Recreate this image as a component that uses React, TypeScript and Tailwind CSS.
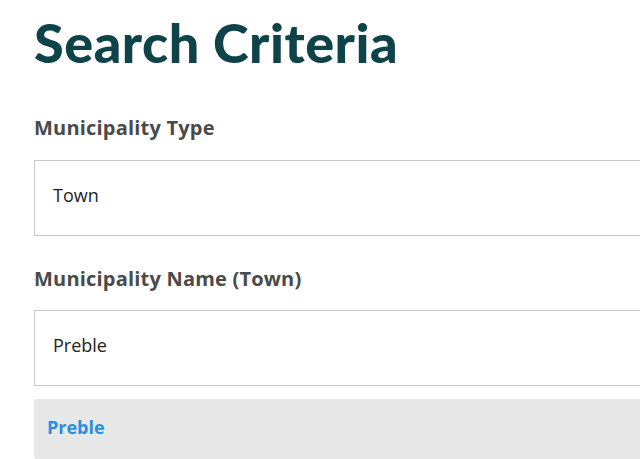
export default function App() {
  return (
    <div className="min-h-screen w-full overflow-hidden bg-white pl-[34px] pt-[11px] font-['Open_Sans',sans-serif]">
      <h1 className="font-['Lato',sans-serif] text-[54px] font-black leading-[64px] tracking-[0.5px] text-[#0f434a]">
        Search Criteria
      </h1>

      <div className="mt-[41px]">
        <label className="block text-[20px] font-bold leading-[24px] tracking-[0.2px] text-[#4a4a4a]">
          Municipality Type
        </label>
        <div className="mt-[20px] flex h-[76px] items-center border border-r-0 border-[#c6c6c6] pb-[5px] pl-[18px] text-[18px] text-[#222]">
          Town
        </div>
      </div>

      <div className="mt-[31px]">
        <label className="block text-[20px] font-bold leading-[24px] tracking-[0.2px] text-[#4a4a4a]">
          Municipality Name (Town)
        </label>
        <div className="mt-[19px] flex h-[76px] items-center border border-r-0 border-[#c6c6c6] pb-[5px] pl-[18px] text-[18px] text-[#222]">
          Preble
        </div>
      </div>

      <div className="mt-[13px] flex h-[60px] items-center rounded-l-[3px] bg-[#e8e8e8] pb-[3px] pl-[13px] text-[18px] font-bold text-[#2a8fe0]">
        Preble
      </div>
    </div>
  );
}
